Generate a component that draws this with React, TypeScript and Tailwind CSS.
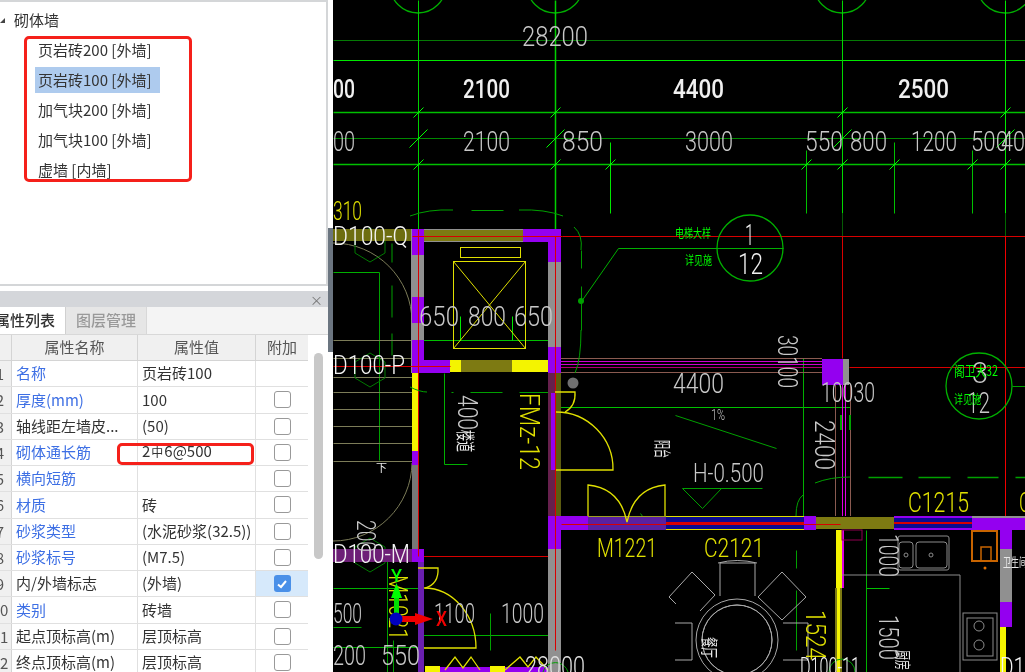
import React from 'react'

const G = '#00e800'
const GD = '#009800'
const GL = '#00ff00'
const Y = '#e0e000'
const P = '#9400f0'
const R = '#d80000'
const W = '#c8c8c8'
const DIM = '#7c7c58'
const GR = '#909090'
const OL = '#7d7a12'

const rows = [
  { no: '1', name: '名称', value: '页岩砖100', blue: true, box: false },
  { no: '2', name: '厚度(mm)', value: '100', blue: true, box: true },
  { no: '3', name: '轴线距左墙皮...', value: '(50)', blue: false, box: true },
  { no: '4', name: '砌体通长筋', value: '', blue: true, box: true },
  { no: '5', name: '横向短筋', value: '', blue: true, box: true },
  { no: '6', name: '材质', value: '砖', blue: true, box: true },
  { no: '7', name: '砂浆类型', value: '(水泥砂浆(32.5))', blue: true, box: true },
  { no: '8', name: '砂浆标号', value: '(M7.5)', blue: true, box: true },
  { no: '9', name: '内/外墙标志', value: '(外墙)', blue: false, box: true, checked: true },
  { no: '10', name: '类别', value: '砖墙', blue: true, box: true },
  { no: '11', name: '起点顶标高(m)', value: '层顶标高', blue: false, box: true },
  { no: '12', name: '终点顶标高(m)', value: '层顶标高', blue: false, box: true },
]

const tree = ['页岩砖200 [外墙]', '页岩砖100 [外墙]', '加气块200 [外墙]', '加气块100 [外墙]', '虚墙 [内墙]']

// [x1, y1, x2, y2, colour, width]
const lines: [number, number, number, number, string, number?][] = [
  [333, 40, 1025, 40, '#057a05'],
  [333, 60, 1025, 60, G],
  [333, 112, 1025, 112, '#00c000', 1.5],
  [333, 138, 1025, 138, '#008800'],
  [333, 164, 1025, 164, '#00c000', 1.5],
  [418, 0, 418, 232, '#00d000'],
  [555, 0, 555, 232, '#00d000', 1.5],
  [842, 0, 842, 213, '#00d800'],
  [842, 213, 842, 236, '#055c05'],
  [1005, 0, 1005, 213, G],
  [1005, 213, 1005, 236, '#006800'],
  [610, 142, 610, 213, G],
  [806, 150, 806, 213, '#00c000'],
  [894, 142, 894, 213, '#00c000'],
  [972, 150, 972, 213, '#00c000'],
  [562, 236, 1025, 236, R],
  [842, 236, 842, 358, R],
  [1005, 236, 1005, 672, '#f00000'],
  [849, 367, 1025, 367, R],
  [581, 301, 618, 248, '#00b000'],
  [618, 248, 783, 248, '#00b000'],
  [333, 272, 379, 272, '#00b000'],
  [379, 272, 379, 460, '#00a000'],
  [391.5, 243, 391.5, 262, '#00a000'],
  [391.5, 285, 391.5, 317, '#00a000'],
  [391.5, 333, 391.5, 355, '#00a000'],
  [581, 250, 581, 268, GD],
  [581, 286, 581, 330, GD],
  // stairs
  [333, 340, 412, 340, DIM],
  [333, 358, 412, 358, DIM],
  [333, 377, 412, 377, DIM],
  [333, 392, 412, 392, DIM],
  [333, 409, 412, 409, DIM],
  [333, 426, 412, 426, DIM],
  [333, 443, 412, 443, DIM],
  [333, 461, 412, 461, DIM],
  [418, 340, 555, 340, '#00c000'],
  [418, 316, 418, 340, G],
  [460, 316, 460, 340, G],
  [512, 316, 512, 340, G],
  [555, 316, 555, 340, G],
  [444, 373, 444, 464, '#00b000'],
  [444, 464, 467, 464, '#00b000'],
  [555, 407, 850, 407, '#00c000'],
  [675, 415, 776, 448, '#00a000'],
  [803, 358, 803, 520, '#00b000'],
  [682, 488, 762, 488, '#00a000'],
  [682, 488, 702, 508, '#00a000'],
  [702, 508, 721, 488, '#00a000'],
  [868, 477, 902, 477, '#00a000', 1.5],
  [918, 477, 950, 477, '#00a000', 1.5],
  [967, 477, 998, 477, '#00a000', 1.5],
  [1015, 477, 1025, 477, '#00a000', 1.5],
  [471, 210, 503, 210, '#00a000'],
  [451, 392, 453, 392, '#00a000'],
  [470, 392, 502, 392, '#00a000'],
  [519, 392, 560, 392, '#00a000'],
  [1012, 386, 1025, 386, '#00a000'],
  [333, 588, 420, 588, '#00b000'],
  [418, 635, 555, 635, '#00b000'],
  [490, 613, 490, 650, '#00a000'],
  [333, 647, 424, 647, '#00b000'],
  [333, 627, 361, 627, '#00a000'],
  [387, 560, 387, 672, '#00a000'],
  [393, 640, 393, 672, '#00a000'],
  [640, 513, 645, 520, '#00a000'],
  [866, 530, 866, 672, '#00b000'],
  [866, 588, 889, 588, '#00c000'],
  [796, 550, 796, 568, '#00a000'],
  [796, 590, 796, 650, '#00a000'],
  [780, 523, 803, 523, '#00b000'],
  [866, 523, 890, 523, '#00c000'],
  [418, 556, 555, 556, R],
]

// [x, y, w, h, colour]
const walls: [number, number, number, number, string][] = [
  [411, 229, 13, 144, GR],
  [548, 229, 13, 144, GR],
  [424, 229, 124, 13, GR],
  [424, 230, 99, 11, OL],
  [412, 229, 12, 26, P],
  [523, 229, 38, 13, P],
  [548, 229, 13, 33, P],
  [412, 297, 12, 26, P],
  [412, 340, 12, 33, P],
  [412, 360, 38, 13, P],
  [450, 360, 11, 12, '#f4f400'],
  [461, 360, 51, 12, OL],
  [512, 360, 36, 12, '#f4f400'],
  [548, 347, 13, 26, P],
  [412, 373, 6, 78, '#f4f400'],
  [412, 451, 6, 14, P],
  [412, 465, 6, 85, '#777777'],
  [548, 373, 13, 144, '#66204d'],
  [551, 393, 5, 77, P],
  [556, 373, 5, 144, '#5c5c10'],
  [548, 517, 13, 32, P],
  [548, 516, 40, 14, P],
  [548, 549, 13, 123, GR],
  [333, 229, 78, 12, '#6e6e10'],
  [333, 549, 79, 13, '#6d1f77'],
  [412, 549, 12, 13, P],
  [418, 562, 6, 110, '#6a1fb0'],
  [425, 666, 15, 6, '#f4f400'],
  [440, 667, 50, 5, P],
  [490, 666, 15, 6, '#f4f400'],
  [505, 667, 43, 5, P],
  // upper horizontal wall
  [561, 358, 261, 1, '#8a5a50'],
  [561, 361, 261, 1, '#d000d0'],
  [561, 364, 261, 1, '#d000d0'],
  [561, 367, 261, 1, '#b00070'],
  [561, 372, 261, 1, '#8a5a50'],
  [822, 359, 27, 26, P],
  [843, 359, 6, 26, GR],
  [835, 385, 1, 131, '#8a5a50'],
  [842, 385, 1, 131, '#e000e0'],
  [845, 385, 1, 131, '#e000e0'],
  [850, 385, 1, 131, '#8a5a50'],
  [840, 415, 2, 15, '#00a000'],
  [849, 415, 2, 15, '#00a000'],
  // lower horizontal wall
  [588, 516, 78, 14, '#5a20a0'],
  [588, 516, 78, 1, '#a0a020'],
  [666, 516, 138, 14, '#0a0a90'],
  [666, 516, 138, 1, Y],
  [666, 529, 138, 1, Y],
  [666, 522, 138, 2, R],
  [804, 516, 12, 14, P],
  [816, 517, 78, 12, OL],
  [894, 516, 78, 14, '#0a0a90'],
  [894, 516, 78, 2, P],
  [894, 522, 78, 2, R],
  [894, 528, 78, 2, P],
  [972, 516, 53, 14, P],
  [972, 516, 53, 2, GR],
  [1000, 530, 12, 19, P],
  [1000, 549, 12, 53, GR],
  [1000, 602, 12, 25, P],
  [1000, 627, 6, 45, '#f4f400'],
  [836, 530, 6, 58, '#f4f400'],
  [842, 530, 2, 58, '#e000e0'],
  [835, 588, 7, 84, OL],
  [837, 588, 3, 84, '#f4f400'],
]

function Txt(props: { x: number; y: number; w: number; s: number; c?: string; r?: boolean; b?: boolean; t: string }) {
  const { x, y, w, s, c = W, r, b, t } = props
  return (
    <text
      x={x}
      y={y}
      fill={c}
      fontSize={s}
      fontWeight={b ? 500 : 300}
      fontFamily="Roboto, sans-serif"
      textLength={w}
      lengthAdjust="spacingAndGlyphs"
      transform={r ? `rotate(90 ${x} ${y})` : undefined}
    >
      {t}
    </text>
  )
}

function Cjk(props: { x: number; y: number; s: number; c?: string; t: string; w?: number; r?: boolean }) {
  return (
    <text
      x={props.x}
      y={props.y}
      fill={props.c ?? '#e8e8e8'}
      fontSize={props.s}
      fontFamily="'Noto Sans CJK SC', sans-serif"
      textLength={props.w}
      lengthAdjust={props.w ? 'spacingAndGlyphs' : undefined}
      transform={props.r ? `rotate(90 ${props.x} ${props.y})` : undefined}
    >
      {props.t}
    </text>
  )
}

function Tick({ x, y, l = 5 }: { x: number; y: number; l?: number }) {
  return <line x1={x - l} y1={y + l} x2={x + l} y2={y - l} stroke={GL} />
}

function Drawing() {
  return (
    <svg viewBox="333 0 692 672" className="h-[672px] w-[692px] shrink-0 bg-black">
      {/* axis bubbles */}
      {[418, 555, 842, 1005].map((x) => (
        <circle key={x} cx={x} cy={-15} r={28} fill="none" stroke="#00b000" strokeWidth="1.3" />
      ))}
      <g transform="translate(0.5 0.5)">
        {lines.map(([x1, y1, x2, y2, c, w], i) => (
          <line key={i} x1={x1} y1={y1} x2={x2} y2={y2} stroke={c} strokeWidth={w ?? 1} />
        ))}
        {[418, 555, 842, 1005].map((x) => (
          <React.Fragment key={x}>
            <Tick x={x} y={112} />
            <Tick x={x} y={138} l={9} />
          </React.Fragment>
        ))}
        {[418, 555, 610, 806, 842, 894, 972, 1005].map((x) => (
          <Tick key={x} x={x} y={164} />
        ))}
      </g>

      {/* stair arcs and hexagons */}
      <path d="M333 243 A79 79 0 0 1 412 322" fill="none" stroke={DIM} />
      <path d="M412 463 A79 79 0 0 1 333 541" fill="none" stroke={DIM} />
      {[245, 370, 555].map((y) => (
        <polygon
          key={y}
          points={`370,${y - 17} 385,${y - 8} 385,${y + 8} 370,${y + 17} 355,${y + 8} 355,${y - 8}`}
          fill="none"
          stroke="#007800"
        />
      ))}

      {walls.map(([x, y, w, h, c], i) => (
        <rect key={i} x={x} y={y} width={w} height={h} fill={c} />
      ))}

      {/* shaft */}
      <g transform="translate(0.5 0.5)">
        <line x1="418" y1="229" x2="418" y2="556" stroke={R} />
        <line x1="412" y1="236" x2="562" y2="236" stroke={R} />
        <line x1="555" y1="236" x2="555" y2="650" stroke={R} />
        <line x1="333" y1="366" x2="450" y2="366" stroke={R} />
        <line x1="561" y1="524" x2="840" y2="524" stroke={R} />
        <rect x="460" y="247" width="60" height="10" fill="none" stroke={Y} />
        <rect x="453" y="261" width="72" height="87" fill="none" stroke={Y} />
        <line x1="453" y1="261" x2="525" y2="348" stroke={Y} />
        <line x1="525" y1="261" x2="453" y2="348" stroke={Y} />
      </g>

      {/* dashed arcs */}
      <path d="M410 216 Q428 209 453 210" fill="none" stroke="#00a000" />
      <path d="M519 210 Q545 209 563 216" fill="none" stroke="#00a000" />
      <path d="M410 387 Q420 392 427 392" fill="none" stroke="#00a000" />
      <path d="M574 227 Q583 235 581 250" fill="none" stroke="#00a000" />
      <path d="M581 330 Q581 360 575 373" fill="none" stroke="#00a000" />
      <path d="M815 483 Q830 477 850 477" fill="none" stroke="#00a000" />
      <path d="M796 516 Q796 500 803 495" fill="none" stroke="#00a000" />
      <circle cx="581" cy="301" r="3" fill="#00a000" />
      <circle cx="573" cy="383" r="5.5" fill="#707070" />

      {/* doors */}
      <g fill="none" stroke={Y} strokeWidth="1.3">
        <path d="M556 412 A57 57 0 0 1 613 470 H556" />
        <path d="M555 392 H575 Q576 406 565 412" />
        <path d="M588 516 V485 Q620 488 627 522 Q634 488 665 485 V516" />
        <path d="M424 588 A52 60 0 0 1 476 648 H424" />
        <path d="M418 568 H438 Q439 584 425 588" />
        <path d="M445 670 L455 657 L463 668 L471 657 L480 670" />
        <path d="M505 670 L520 657 L528 667 L536 657 L548 670" />
      </g>

      {/* callouts */}
      <circle cx="750" cy="248" r="33" fill="none" stroke="#00b000" strokeWidth="1.3" />
      <circle cx="979" cy="386" r="33" fill="none" stroke="#00b000" strokeWidth="1.3" />

      {/* kitchen and dining furniture */}
      <g fill="none" stroke="#a8a8a8">
        <circle cx="737" cy="640" r="41" />
        <circle cx="737" cy="640" r="35" />
        <path d="M720 596 V563 H755 V596" />
        <path d="M718 563 Q737 558 757 563" />
        <path d="M692 572 L715 595 L700 611" />
        <path d="M692 572 L669 597 L676 604" />
        <path d="M782 572 L806 597 L782 620 L758 597 Z" />
        <path d="M675 623 H692 V660 H675" />
        <path d="M783 623 H808 V660 H783" />
      </g>
      <circle cx="737" cy="640" r="34" fill="#000" />
      <circle cx="737" cy="640" r="35" fill="none" stroke="#a8a8a8" />
      <g fill="none" stroke="#8c8c8c">
        <rect x="898" y="536" width="51" height="34" rx="2" />
        <rect x="899" y="542" width="14" height="26" rx="3" />
        <rect x="916" y="542" width="31" height="26" rx="3" />
        <circle cx="906" cy="555" r="2" />
        <circle cx="931" cy="555" r="2" />
        <path d="M842 575 H960 V672" />
        <rect x="963" y="613" width="34" height="47" />
        <rect x="967" y="618" width="26" height="38" />
        <circle cx="979" cy="626" r="5" />
        <circle cx="979" cy="645" r="5" />
      </g>
      <rect x="972" y="531" width="25" height="30" fill="none" stroke="#c86400" strokeWidth="2" />
      <path d="M981 561 V547 H991 V561" fill="none" stroke="#c86400" strokeWidth="1.5" />
      <circle cx="985" cy="568" r="1.5" fill="#e07000" />
      <rect x="842" y="530" width="20" height="10" fill="none" stroke="#900050" />
      <path d="M829 672 A13 13 0 0 1 855 672" fill="none" stroke="#00a000" />
      <path d="M543 672 A13 13 0 0 1 568 672" fill="none" stroke="#00a000" />

      {/* dimensions */}
      <Txt x={522} y={46} w={66} s={27} t="28200" />
      <Txt x={333} y={98} w={22} s={26} c="#f0f0f0" b t="00" />
      <Txt x={463} y={98} w={47} s={26} c="#f0f0f0" b t="2100" />
      <Txt x={673} y={98} w={51} s={26} c="#f0f0f0" b t="4400" />
      <Txt x={898} y={98} w={51} s={26} c="#f0f0f0" b t="2500" />
      <Txt x={333} y={151} w={22} s={27} t="00" />
      <Txt x={463} y={151} w={47} s={27} t="2100" />
      <Txt x={562} y={151} w={41} s={27} t="850" />
      <Txt x={685} y={151} w={48} s={27} t="3000" />
      <Txt x={805} y={151} w={38} s={27} t="550" />
      <Txt x={850} y={151} w={37} s={27} t="800" />
      <Txt x={911} y={151} w={46} s={27} t="1200" />
      <Txt x={971} y={151} w={37} s={27} t="500" />
      <Txt x={1001} y={151} w={24} s={27} t="40" />
      <Txt x={333} y={220} w={29} s={26} c={Y} t="310" />
      <Txt x={333} y={245} w={75} s={26} c="#f4f4f4" t="D100-Q" />
      <Txt x={419} y={326} w={40} s={27} t="650" />
      <Txt x={468} y={326} w={38} s={27} t="800" />
      <Txt x={514} y={326} w={39} s={27} t="650" />
      <Txt x={333} y={374} w={72} s={26} c="#f4f4f4" t="D100-P" />
      <Txt x={333} y={563} w={77} s={26} c="#f4f4f4" t="D100-M" />
      <Txt x={745} y={245} w={9} s={30} c="#f0f0f0" t="1" />
      <Txt x={738} y={274} w={25} s={30} c="#f0f0f0" t="12" />
      <Txt x={972} y={383} w={16} s={30} t="3" />
      <Txt x={967} y={413} w={23} s={30} t="12" />
      <Txt x={458} y={395} w={35} s={27} r t="400" />
      <Txt x={520} y={393} w={77} s={28} c={Y} r t="FMz-12" />
      <Txt x={673} y={393} w={51} s={27} t="4400" />
      <Txt x={778} y={335} w={53} s={27} r t="30100" />
      <Txt x={821} y={402} w={54} s={27} t="10030" />
      <Txt x={815} y={420} w={50} s={27} r t="2400" />
      <Txt x={693} y={482} w={71} s={25} t="H-0.500" />
      <Txt x={597} y={557} w={60} s={26} c={Y} t="M1221" />
      <Txt x={704} y={557} w={60} s={26} c={Y} t="C2121" />
      <Txt x={908} y={512} w={61} s={27} c={Y} t="C1215" />
      <Txt x={1019} y={512} w={12} s={27} c={Y} t="C" />
      <Txt x={357} y={520} w={32} s={26} r t="200" />
      <Txt x={389} y={575} w={65} s={26} c={Y} r t="M1021" />
      <Txt x={434} y={623} w={41} s={27} t="1100" />
      <Txt x={501} y={623} w={43} s={27} t="1000" />
      <Txt x={333} y={623} w={29} s={27} t="500" />
      <Txt x={333} y={665} w={33} s={27} t="200" />
      <Txt x={381} y={665} w={39} s={27} t="550" />
      <Txt x={525} y={676} w={60} s={27} c="#e0e0e0" t="28000" />
      <Txt x={879} y={534} w={43} s={27} r t="1000" />
      <Txt x={879} y={615} w={45} s={27} r t="1500" />
      <Txt x={806} y={610} w={50} s={27} c={Y} r t="1524" />
      <Txt x={800} y={676} w={60} s={26} c="#f4f4f4" t="D100-11" />
      <Txt x={1000} y={676} w={25} s={26} c="#f4f4f4" t="D1" />

      {/* small labels */}
      <Cjk x={675} y={238} s={12} c={GL} w={36} t="电梯大样" />
      <Cjk x={685} y={265} s={12} c={GL} w={27} t="详见施" />
      <Cjk x={954} y={376} s={14} c={GL} w={44} t="阁卫大32" />
      <Cjk x={954} y={404} s={12} c={GL} w={27} t="详见施" />
      <Cjk x={458} y={430} s={19} r w={22} t="楼道" />
      <Cjk x={656} y={440} s={17} r w={18} t="阳台" />
      <Cjk x={376} y={472} s={11} t="下" />
      <Cjk x={703} y={637} s={17} r w={21} t="餐厅" />
      <Cjk x={897} y={650} s={16} r w={20} t="厨房" />
      <Cjk x={1003} y={567} s={12} w={24} t="卫生间" />
      <Txt x={711} y={420} w={14} s={15} t="1%" />

      {/* origin marker */}
      <rect x="394" y="594" width="5" height="22" fill="#00e000" />
      <polygon points="396.5,583 391,598 402,598" fill="#00ff00" />
      <rect x="402" y="616" width="18" height="6" fill="#f00000" />
      <polygon points="433,619 415,613 415,625" fill="#f00000" />
      <circle cx="396" cy="619" r="6.5" fill="#0000c0" />
      <Txt x={391} y={582} w={11} s={19} c={GL} b t="Y" />
      <Txt x={436} y={626} w={11} s={21} c="#f00000" b t="X" />
    </svg>
  )
}

export default function App() {
  return (
    <div className="relative flex h-[672px] w-[1025px] overflow-hidden bg-white font-['Noto_Sans_CJK_SC',sans-serif] text-[15px] text-[#333] blur-[0.4px]">
      <div className="flex h-full w-[333px] shrink-0 flex-col border-r-[5px] border-r-white">
        <div className="flex h-[286px] w-[328px] shrink-0 flex-col border-y-2 border-r-2 border-[#d4d6d8] bg-white pt-[8px]">
          <div className="flex h-[20px] items-center pl-[14px]">
            <span className="absolute left-0 top-[18px] h-0 w-0 border-b-[5px] border-l-[5px] border-b-[#444] border-l-transparent" />
            砌体墙
          </div>
          <div className="mt-[5px] flex h-[150px] flex-col overflow-hidden pl-[35px]">
            {tree.map((t, i) => (
              <div key={t} className="flex h-[30px] shrink-0 items-center">
                <span className={`flex h-[26px] w-[125px] items-center whitespace-nowrap pl-[3px] ${i === 1 ? 'bg-[#aecbee]' : ''}`}>{t}</span>
              </div>
            ))}
          </div>
        </div>

        <div className="flex min-h-0 flex-1 flex-col">
          <div className="mt-[5px] flex h-[16px] w-[328px] shrink-0 items-center justify-end bg-[#d4d6da] pr-[5px] text-[13px] leading-none text-[#777]">×</div>
          <div className="flex h-[28px] w-[328px] shrink-0 border-b border-[#d8d8d8] bg-[#f4f4f4]">
            <div className="flex w-[66px] items-center justify-end overflow-hidden whitespace-nowrap border-r border-[#d0d0d0] bg-white pr-[10px] font-medium">
              <span className="-ml-[10px]">属性列表</span>
            </div>
            <div className="flex w-[81px] items-center justify-center border-r border-[#d8d8d8] bg-[#e6e6e6] font-medium text-[#999]">图层管理</div>
          </div>
          <div className="flex min-h-0 w-[328px] flex-1 bg-white">
            <div className="w-[308px] shrink-0">
              <div className="grid h-[26px] grid-cols-[12px_126px_118px_52px] border-b border-[#d4d4d4] bg-[#f0f0f0] text-[#555]">
                <div className="border-r border-[#d4d4d4]" />
                <div className="flex items-center justify-center border-r border-[#d4d4d4]">属性名称</div>
                <div className="flex items-center justify-center border-r border-[#d4d4d4]">属性值</div>
                <div className="flex items-center justify-center">附加</div>
              </div>
              {rows.map((r) => (
                <div key={r.no} className="grid h-[26.25px] grid-cols-[12px_126px_118px_52px] border-b border-[#e0e0e0] whitespace-nowrap">
                  <div className="overflow-hidden border-r border-[#d4d4d4] bg-[#f0f0f0]">
                    <div className="-ml-[11px] w-[22px] text-center leading-[26px] text-[#555]">{r.no}</div>
                  </div>
                  <div className={`flex items-center overflow-hidden border-r border-[#e0e0e0] pl-[4px] ${r.blue ? 'text-[#3d6fe4]' : 'text-[#333]'}`}>{r.name}</div>
                  <div className="flex items-center overflow-hidden border-r border-[#e0e0e0] pl-[4px]">
                    {r.no === '4' ? (
                      <span className="-mt-[3px]">
                        2<span className="mx-[1px] text-[12px]">中</span>6@500
                      </span>
                    ) : (
                      r.value
                    )}
                  </div>
                  <div className={`flex items-center justify-center ${r.checked ? 'bg-[#d6e9fb]' : ''}`}>
                    {r.box && !r.checked && <span className="h-[17px] w-[17px] rounded-[3px] border border-[#999] bg-white" />}
                    {r.checked && (
                      <span className="flex h-[17px] w-[17px] items-center justify-center rounded-[3px] bg-[#4a90e8]">
                        <svg viewBox="0 0 12 12" className="h-[12px] w-[12px]">
                          <path d="M2 6.5 L5 9 L10 3" fill="none" stroke="#fff" strokeWidth="2" />
                        </svg>
                      </span>
                    )}
                  </div>
                </div>
              ))}
            </div>
            <div className="w-[20px] shrink-0 pl-[6px] pt-[18px]">
              <div className="h-[206px] w-[9px] rounded-full bg-[#c8c8c8]" />
            </div>
          </div>
        </div>
      </div>

      {/* splitter between the panels and the drawing */}
      <div className="absolute left-[328px] top-[228px] h-[124px] w-[5px] bg-[#6b7580]" />

      <Drawing />

      {/* hand-drawn red markup */}
      <div className="absolute left-[24px] top-[36px] h-[146px] w-[168px] rounded-[5px] border-[3px] border-[#f5201a]" />
      <div className="absolute left-[117px] top-[443px] h-[22px] w-[137px] rounded-[5px] border-[3px] border-[#f5201a]" />
    </div>
  )
}
